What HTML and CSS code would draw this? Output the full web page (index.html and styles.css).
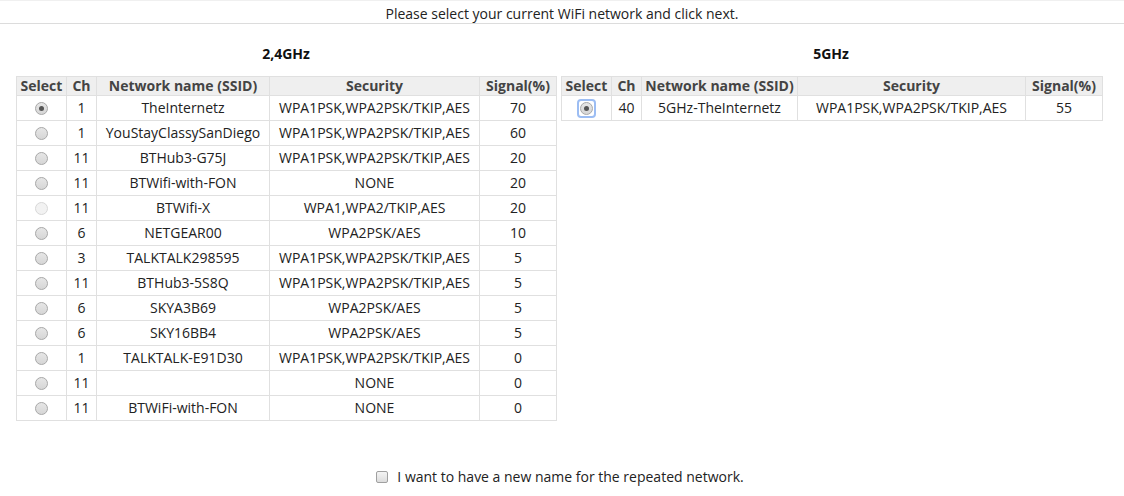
FILE: index.html
```html
<!DOCTYPE html>
<html>
<head>
<meta charset="utf-8">
<link rel="stylesheet" href="styles.css">
</head>
<body>
<div class="topbar">Please select your current WiFi network and click next.</div>
<div class="bands">
  <div class="band">
    <div class="band-title">2,4GHz</div>
    <table class="nets">
      <thead><tr><th class="c-sel">Select</th><th class="c-ch">Ch</th><th class="c-name">Network name (SSID)</th><th class="c-sec">Security</th><th class="c-sig">Signal(%)</th></tr></thead>
      <tbody>
        <tr><td><span class="radio checked"></span></td><td>1</td><td>TheInternetz</td><td>WPA1PSK,WPA2PSK/TKIP,AES</td><td>70</td></tr>
        <tr><td><span class="radio"></span></td><td>1</td><td>YouStayClassySanDiego</td><td>WPA1PSK,WPA2PSK/TKIP,AES</td><td>60</td></tr>
        <tr><td><span class="radio"></span></td><td>11</td><td>BTHub3-G75J</td><td>WPA1PSK,WPA2PSK/TKIP,AES</td><td>20</td></tr>
        <tr><td><span class="radio"></span></td><td>11</td><td>BTWifi-with-FON</td><td>NONE</td><td>20</td></tr>
        <tr><td><span class="radio disabled"></span></td><td>11</td><td>BTWifi-X</td><td>WPA1,WPA2/TKIP,AES</td><td>20</td></tr>
        <tr><td><span class="radio"></span></td><td>6</td><td>NETGEAR00</td><td>WPA2PSK/AES</td><td>10</td></tr>
        <tr><td><span class="radio"></span></td><td>3</td><td>TALKTALK298595</td><td>WPA1PSK,WPA2PSK/TKIP,AES</td><td>5</td></tr>
        <tr><td><span class="radio"></span></td><td>11</td><td>BTHub3-5S8Q</td><td>WPA1PSK,WPA2PSK/TKIP,AES</td><td>5</td></tr>
        <tr><td><span class="radio"></span></td><td>6</td><td>SKYA3B69</td><td>WPA2PSK/AES</td><td>5</td></tr>
        <tr><td><span class="radio"></span></td><td>6</td><td>SKY16BB4</td><td>WPA2PSK/AES</td><td>5</td></tr>
        <tr><td><span class="radio"></span></td><td>1</td><td>TALKTALK-E91D30</td><td>WPA1PSK,WPA2PSK/TKIP,AES</td><td>0</td></tr>
        <tr><td><span class="radio"></span></td><td>11</td><td></td><td>NONE</td><td>0</td></tr>
        <tr><td><span class="radio"></span></td><td>11</td><td>BTWiFi-with-FON</td><td>NONE</td><td>0</td></tr>
      </tbody>
    </table>
  </div>
  <div class="band">
    <div class="band-title">5GHz</div>
    <table class="nets">
      <thead><tr><th class="c-sel">Select</th><th class="c-ch">Ch</th><th class="c-name5">Network name (SSID)</th><th class="c-sec5">Security</th><th class="c-sig">Signal(%)</th></tr></thead>
      <tbody>
        <tr><td><span class="focus-ring"><span class="radio checked"></span></span></td><td>40</td><td>5GHz-TheInternetz</td><td>WPA1PSK,WPA2PSK/TKIP,AES</td><td>55</td></tr>
      </tbody>
    </table>
  </div>
</div>
<div class="rename">
  <label class="rename-label"><span class="checkbox"></span>I want to have a new name for the repeated network.</label>
</div>
</body>
</html>
```
FILE: styles.css
```css
html, body {
  margin: 0;
  padding: 0;
  background: #fff;
}
body {
  font-family: "Open Sans", "Liberation Sans", sans-serif;
  font-size: 14px;
  color: #222;
  width: 1124px;
  height: 496px;
  overflow: hidden;
}
.topbar {
  border-top: 1px solid #f0f0f0;
  border-bottom: 1px solid #dcdcdc;
  height: 22px;
  line-height: 26px;
  text-align: center;
  color: #222;
}
.bands {
  display: flex;
  gap: 5px;
  padding-left: 16px;
  margin-top: 20px;
}
.band {
  width: 540px;
}
.band-title {
  text-align: center;
  font-weight: bold;
  font-size: 14px;
  height: 32px;
  line-height: 20px;
  color: #111;
}
.nets {
  border-collapse: collapse;
  width: 540px;
  table-layout: fixed;
}
.nets th, .nets td {
  border: 1px solid #e0e0e0;
  text-align: center;
  padding: 0;
  white-space: nowrap;
}
.nets th {
  background: #efefef;
  color: #444;
  font-weight: bold;
  height: 18px;
  line-height: 18px;
}
.nets td {
  height: 24px;
  line-height: 24px;
}
.c-sel { width: 49px; }
.c-ch { width: 29px; }
.c-name { width: 172px; }
.c-sec { width: 209px; }
.c-sig { width: 76px; }
.c-name5 { width: 155px; }
.c-sec5 { width: 227px; }
.radio {
  display: inline-block;
  width: 11px;
  height: 11px;
  border-radius: 50%;
  border: 1px solid #a9a9a9;
  background: linear-gradient(#e6e6e6, #d6d6d6);
  vertical-align: middle;
  position: relative;
  top: -1px;
  box-sizing: content-box;
}
.radio.checked::after {
  content: "";
  position: absolute;
  left: 3px;
  top: 3px;
  width: 5px;
  height: 5px;
  border-radius: 50%;
  background: #555;
}
.radio.disabled {
  border-color: #d8d8d8;
  background: #f2f2f2;
}
.focus-ring {
  display: inline-block;
  line-height: 0;
  padding: 1px;
  border: 2px solid #9cbdf3;
  border-radius: 4px;
  vertical-align: middle;
  margin-top: -2px;
}
.focus-ring .radio {
  top: 0;
}
.rename {
  margin-top: 46px;
  padding-right: 4px;
  text-align: center;
}
.rename-label {
  display: inline-flex;
  align-items: center;
  color: #222;
}
.checkbox {
  display: inline-block;
  width: 10px;
  height: 10px;
  border: 1px solid #a0a0a0;
  border-radius: 2px;
  background: linear-gradient(#f4f4f4, #dcdcdc);
  margin-right: 9px;
}
```
